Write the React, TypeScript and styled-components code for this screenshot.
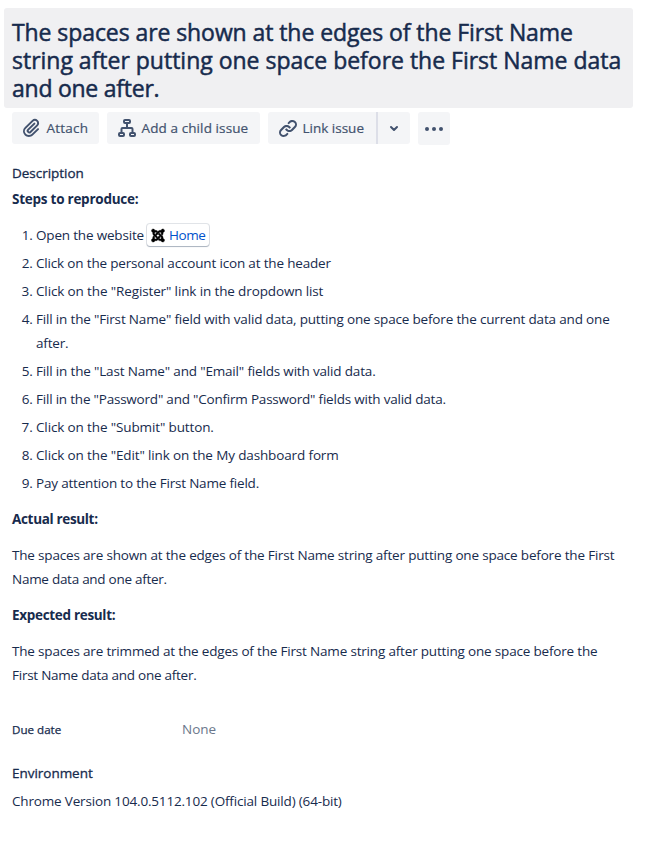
import React from "react";
import styled, { createGlobalStyle } from "styled-components";
import { FaJoomla } from "react-icons/fa";

const Global = createGlobalStyle`
  * { box-sizing: border-box; }
  body { margin: 0; background: #fff; color: #172b4d; font-family: "Open Sans", "Noto Sans", sans-serif; font-size: 13.5px; }
  h1, p, ol, h2 { margin: 0; padding: 0; }
`;

const Page = styled.main`
  width: 650px;
  height: 843px;
  padding: 8px 17px 0 4px;
  overflow: hidden;
`;

/* A run of text with its own tracking. */
const Run = styled.span<{ $track: number }>`
  letter-spacing: ${(p) => p.$track}px;
`;

const Title = styled.h1`
  height: 100px;
  padding: 9.5px 8px;
  border-radius: 3px;
  background: #f0f0f2;
  font-size: 23px;
  font-weight: 400;
  line-height: 28px;
  white-space: nowrap;
  -webkit-text-stroke: 0.5px currentColor;
`;

const TitleLine = styled.span<{ $track: number }>`
  display: block;
  height: 28px;
  letter-spacing: ${(p) => p.$track}px;
`;

const Toolbar = styled.div`
  display: flex;
  gap: 8px;
  height: 33px;
  margin: 4px 0 0 8px;
`;

const Split = styled.div`
  display: flex;
`;

const Button = styled.button<{ $w: number; $track?: number; $tall?: boolean; $edge?: "left" | "right" }>`
  display: flex;
  align-items: center;
  gap: 2.5px;
  width: ${(p) => p.$w}px;
  height: ${(p) => (p.$tall ? 33 : 32)}px;
  padding: 0 0 0 ${(p) => (p.$w < 40 ? 4 : 8)}px;
  border: 0;
  border-right: ${(p) => (p.$edge === "left" ? "2px solid #dddfe8" : "0")};
  border-radius: ${(p) => (p.$edge === "left" ? "3px 0 0 3px" : p.$edge === "right" ? "0 3px 3px 0" : "3px")};
  background: #f4f5f7;
  color: #42526e;
  font: 400 13.5px "Open Sans", "Noto Sans", sans-serif;
  letter-spacing: ${(p) => p.$track ?? 0}px;
  white-space: nowrap;
  -webkit-text-stroke: 0.2px currentColor;
`;

const Icon = styled.svg`
  width: 24px;
  height: 24px;
  flex: none;
  fill: currentColor;
  -webkit-text-stroke: 0;
`;

const Content = styled.section`
  margin-left: 8px;
`;

const Heading = styled.h2<{ $top: number }>`
  margin-top: ${(p) => p.$top}px;
  font-size: 13.5px;
  font-weight: 400;
  line-height: 20px;
  letter-spacing: -0.03px;
  -webkit-text-stroke: 0.3px currentColor;
`;

const Strong = styled.p<{ $top: number; $track: number }>`
  margin-top: ${(p) => p.$top}px;
  font-weight: 700;
  line-height: 24px;
  letter-spacing: ${(p) => p.$track}px;
`;

const Text = styled.p<{ $top: number }>`
  margin-top: ${(p) => p.$top}px;
  line-height: 24px;
  white-space: nowrap;
`;

const Steps = styled.ol`
  margin-top: 12px;
  padding-left: 24px;
  line-height: 24px;
  white-space: nowrap;
`;

const Step = styled.li<{ $track: number }>`
  letter-spacing: ${(p) => p.$track}px;
  & + & { margin-top: 4px; }
`;

const FirstStep = styled.span`
  display: flex;
  align-items: center;
  gap: 3px;
  height: 24px;
`;

const SmartLink = styled.a`
  display: inline-flex;
  align-items: center;
  gap: 4px;
  width: 62px;
  height: 22px;
  padding-left: 4px;
  border-radius: 3px;
  color: #0052cc;
  letter-spacing: -0.4px;
  box-shadow: 0 1px 1px rgba(9, 30, 66, 0.25), 0 0 0 1px rgba(9, 30, 66, 0.12);
`;

const SiteIcon = styled(FaJoomla)`
  width: 14px;
  height: 15px;
  flex: none;
  color: #000;
  stroke: #000;
  stroke-width: 12;
`;

const Field = styled.div`
  display: grid;
  grid-template-columns: 170px 1fr;
  align-items: center;
  height: 20px;
  margin-top: 32px;
`;

const Label = styled.span`
  font-size: 11.6px;
  -webkit-text-stroke: 0.25px currentColor;
`;

const Muted = styled.span`
  color: #6b778c;
`;

const AttachIcon = () => (
  <Icon viewBox="0 0 24 24">
    <path d="M11.643 17.965c-1.53 1.495-4.016 1.496-5.542.004a3.773 3.773 0 01.002-5.412l7.147-6.985a2.316 2.316 0 013.233-.003c.893.873.895 2.282.004 3.153l-6.703 6.55a.653.653 0 01-.914-.008.62.62 0 010-.902l6.229-6.087a.941.941 0 000-1.353.995.995 0 00-1.384 0l-6.23 6.087a2.502 2.502 0 000 3.607 2.643 2.643 0 003.683.009l6.703-6.55a4.074 4.074 0 00-.003-5.859 4.306 4.306 0 00-6.002.003l-7.148 6.985a5.655 5.655 0 00-.001 8.118c2.29 2.237 6.019 2.237 8.308-.004l5.714-5.584a.941.941 0 000-1.353.995.995 0 00-1.384 0l-5.712 5.584z" />
  </Icon>
);

const ChildIcon = () => (
  <Icon viewBox="0 0 24 24">
    <g fill="none" stroke="currentColor" strokeWidth="2">
      <rect x="9" y="4" width="6" height="3" rx="1" />
      <rect x="4" y="17" width="5" height="3" rx="1" />
      <rect x="15" y="17" width="5" height="3" rx="1" />
      <path d="M12 7v5M6.500 17v-4a1 1 0 011-1h9a1 1 0 011 1v4" />
    </g>
  </Icon>
);

const LinkIcon = () => (
  <Icon viewBox="0 0 24 24">
    <path d="M12.856 5.457l-.937.92a1.002 1.002 0 000 1.437 1.047 1.047 0 001.463 0l.984-.966c.967-.95 2.542-1.135 3.602-.288a2.54 2.54 0 01.203 3.81l-2.903 2.852a2.646 2.646 0 01-3.696 0l-1.11-1.09L9 13.57l1.108 1.089c1.822 1.788 4.802 1.788 6.622 0l2.905-2.852a4.558 4.558 0 00-.357-6.82c-1.893-1.517-4.695-1.226-6.422.47" />
    <path d="M11.144 19.543l.937-.92a1.002 1.002 0 000-1.437 1.047 1.047 0 00-1.462 0l-.985.966c-.967.95-2.542 1.135-3.602.288a2.54 2.54 0 01-.203-3.81l2.903-2.852a2.646 2.646 0 013.696 0l1.11 1.09L15 11.43l-1.108-1.089c-1.822-1.788-4.802-1.788-6.622 0l-2.905 2.852a4.558 4.558 0 00.357 6.82c1.893 1.517 4.695 1.226 6.422-.47" />
  </Icon>
);

const ChevronIcon = () => (
  <Icon viewBox="0 0 24 24">
    <path d="M9 11l3 3 3-3" fill="none" stroke="currentColor" strokeWidth="2" strokeLinecap="round" strokeLinejoin="round" />
  </Icon>
);

const MoreIcon = () => (
  <Icon viewBox="0 0 24 24">
    <circle cx="5" cy="12" r="2" />
    <circle cx="12" cy="12" r="2" />
    <circle cx="19" cy="12" r="2" />
  </Icon>
);

export default function App() {
  return (
    <Page>
      <Global />
      <Title>
        <TitleLine $track={-0.08}>The spaces are shown at the edges of the First Name</TitleLine>
        <TitleLine $track={-0.01}>string after putting one space before the First Name data</TitleLine>
        <TitleLine $track={-0.25}>and one after.</TitleLine>
      </Title>
      <Toolbar>
        <Button $w={87} $track={0.2}><AttachIcon />Attach</Button>
        <Button $w={153} $track={0.1}><ChildIcon />Add a child issue</Button>
        <Split>
          <Button $w={110} $edge="left"><LinkIcon />Link issue</Button>
          <Button $w={32} $edge="right" aria-label="Link options"><ChevronIcon /></Button>
        </Split>
        <Button $w={32} $tall aria-label="More actions"><MoreIcon /></Button>
      </Toolbar>
      <Content>
        <Heading $top={18}>Description</Heading>
        <Strong $top={4} $track={-0.25}>Steps to reproduce:</Strong>
        <Steps>
          <Step $track={-0.18}><FirstStep>Open the website <SmartLink><SiteIcon />Home</SmartLink></FirstStep></Step>
          <Step $track={-0.17}>Click on the personal account icon at the header</Step>
          <Step $track={-0.13}>Click on the "Register" link in the dropdown list</Step>
          <Step $track={-0.17}>Fill in the "First Name" field with valid data, putting one space before the current data and one<br />after.</Step>
          <Step $track={-0.17}>Fill in the "Last Name" and "Email" fields with valid data.</Step>
          <Step $track={-0.21}>Fill in the "Password" and "Confirm Password" fields with valid data.</Step>
          <Step $track={-0.13}>Click on the "Submit" button.</Step>
          <Step $track={-0.135}>Click on the "Edit" link on the My dashboard form</Step>
          <Step $track={-0.19}>Pay attention to the First Name field.</Step>
        </Steps>
        <Strong $top={12} $track={-0.33}>Actual result:</Strong>
        <Text $top={12}>
          <Run $track={-0.18}>The spaces are shown at the edges of the First Name string after putting one space before the First</Run><br />
          <Run $track={-0.27}>Name data and one after.</Run>
        </Text>
        <Strong $top={12} $track={-0.31}>Expected result:</Strong>
        <Text $top={12}>
          <Run $track={-0.18}>The spaces are trimmed at the edges of the First Name string after putting one space before the</Run><br />
          <Run $track={-0.25}>First Name data and one after.</Run>
        </Text>
        <Field><Label>Due date</Label><Muted>None</Muted></Field>
        <Heading $top={24}>Environment</Heading>
        <Text $top={6}><Run $track={-0.17}>Chrome Version 104.0.5112.102 (Official Build) (64-bit)</Run></Text>
      </Content>
    </Page>
  );
}
